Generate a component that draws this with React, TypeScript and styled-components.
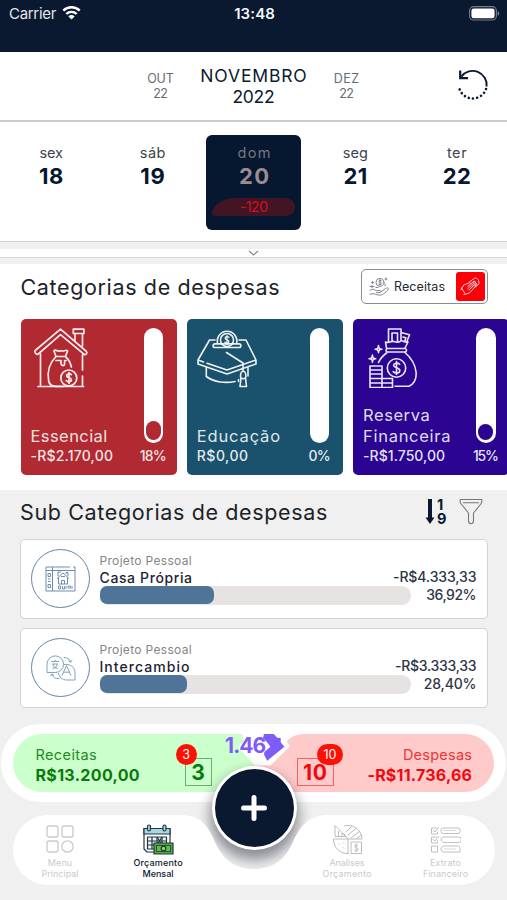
import React from 'react';
import styled, { createGlobalStyle } from 'styled-components';

const navy = '#0a1930';

const GlobalStyle = createGlobalStyle`
  *, *::before, *::after { box-sizing: border-box; }
  body { margin: 0; background: #f0f0f0; overflow: hidden; font-family: Inter, 'Open Sans', sans-serif; }
`;

const Screen = styled.div`
  width: 507px;
  height: 900px;
  overflow: hidden;
  background: #f0f0f0;
  display: flex;
  flex-direction: column;
`;

const Text = styled.span<{ $size: number; $line: number; $weight?: number; $track?: number; $color?: string }>`
  display: block;
  white-space: nowrap;
  font-size: ${p => p.$size}px;
  line-height: ${p => p.$line}px;
  font-weight: ${p => p.$weight ?? 400};
  letter-spacing: ${p => p.$track ?? 0}px;
  margin-right: ${p => -(p.$track ?? 0)}px;
  color: ${p => p.$color ?? navy};
`;

/* ---------- top ---------- */

const StatusBar = styled.header`
  flex: none;
  height: 52px;
  padding: 4px 7px 0 9px;
  background: ${navy};
  display: grid;
  grid-template-columns: 1fr auto 1fr;
  align-items: start;
`;

const Carrier = styled.div`
  display: flex;
  gap: 6px;
  svg { margin-top: 1px; }
`;

const BatterySlot = styled.div`
  display: flex;
  justify-content: flex-end;
  padding-top: 2px;
`;

const MonthBar = styled.section`
  flex: none;
  height: 70px;
  background: #fff;
  border-bottom: 2px solid #cbcbcb;
  display: grid;
  grid-template-columns: 1fr 28px 106px 28px 1fr;
  column-gap: 26px;
  padding: 13px 18px 0;
`;

const Month = styled.div<{ $drop?: number }>`
  display: flex;
  flex-direction: column;
  align-items: center;
  padding-top: ${p => p.$drop ?? 0}px;
`;

const ResetSlot = styled.div`
  display: flex;
  justify-content: flex-end;
  padding-top: 4px;
`;

const DayStrip = styled.section`
  flex: none;
  height: 120px;
  background: #fff;
  border-bottom: 1px solid #d2d2d2;
  display: grid;
  grid-template-columns: repeat(5, 101.4px);
  justify-items: center;
  padding: 12.5px 0 0 0.5px;
`;

const Day = styled.div<{ $active?: boolean }>`
  width: 95px;
  height: 95px;
  border-radius: 6px;
  background: ${p => (p.$active ? '#061730' : 'transparent')};
  display: flex;
  flex-direction: column;
  align-items: center;
  padding-top: 9.5px;
`;

const DayTotal = styled.div`
  width: 83px;
  height: 18px;
  margin-top: 7px;
  border-radius: 24px 10px 10px 4px / 17px 9px 9px 2px;
  background: #421524;
  display: flex;
  justify-content: center;
`;

const Expander = styled.div`
  flex: none;
  height: 22px;
  background: #f0f0f0;
  padding-top: 7px;
`;

const ExpanderTrack = styled.div`
  height: 9px;
  background: #fff;
  border-bottom: 1px solid #d6d6d6;
  display: flex;
  justify-content: center;
  align-items: center;
`;

/* ---------- categories ---------- */

const Categories = styled.section`
  flex: none;
  height: 226px;
  background: #fff;
  padding: 5px 0 0 20.5px;
`;

const CategoriesHead = styled.div`
  display: flex;
  justify-content: space-between;
  padding-right: 19px;
`;

const Toggle = styled.button`
  width: 127px;
  height: 35px;
  border: 1px solid #8d8d8d;
  border-radius: 5px;
  background: #fff;
  padding: 0 2px 0 7px;
  display: flex;
  align-items: center;
  font-family: inherit;
`;

const ToggleLabel = styled(Text)`
  flex: 1;
  text-align: left;
  padding-left: 4px;
`;

const ToggleThumb = styled.span`
  width: 29.5px;
  height: 29.5px;
  border-radius: 3px;
  background: #fb0007;
  display: flex;
  align-items: center;
  justify-content: center;
`;

const Cards = styled.div`
  display: flex;
  gap: 10px;
  padding-top: 14px;
`;

const Card = styled.article<{ $bg: string }>`
  flex: none;
  width: 156.3px;
  height: 156px;
  border-radius: 5px;
  background: ${p => p.$bg};
  padding: 9px 10px 10px;
  display: grid;
  grid-template-columns: 1fr 27px;
`;

const CardMain = styled.div`
  display: flex;
  flex-direction: column;
  justify-content: space-between;
`;

const IconPad = styled.div<{ $x: number }>`
  padding-left: ${p => p.$x}px;
  height: 58px;
`;

const CardSide = styled.div`
  display: flex;
  flex-direction: column;
  align-items: center;
  justify-content: space-between;
`;

const Meter = styled.div`
  width: 19.5px;
  height: 115px;
  border-radius: 10px;
  background: #fff;
  display: flex;
  align-items: flex-end;
  justify-content: center;
  padding-bottom: 3px;
`;

const MeterFill = styled.div<{ $h: number; $color: string }>`
  width: 15px;
  height: ${p => p.$h}px;
  border-radius: 7.5px;
  background: ${p => p.$color};
`;

/* ---------- sub categories ---------- */

const SubCategories = styled.section`
  flex: none;
  height: 234px;
  padding: 7px 19.5px 0 20px;
`;

const SubHead = styled.div`
  display: flex;
  justify-content: space-between;
  height: 42px;
`;

const Tools = styled.div`
  display: flex;
  gap: 12px;
  padding: 1px 5px 0 0;
`;

const SortBox = styled.div`
  display: flex;
  gap: 2px;
`;

const SubRow = styled.article`
  height: 80px;
  margin-bottom: 9px;
  border: 1px solid #d3d3d3;
  border-radius: 5px;
  background: #fff;
  display: grid;
  grid-template-columns: 60px minmax(0, 1fr) auto;
  padding: 9px 10px 0;
`;

const Round = styled.div`
  width: 59px;
  height: 59px;
  border: 1.5px solid #6485a9;
  border-radius: 50%;
  display: flex;
  align-items: center;
  justify-content: center;
`;

const SubBody = styled.div`
  padding: 2.500px 0 0 8.500px;
`;

const Track = styled.div`
  width: 311px;
  height: 19px;
  border-radius: 9px;
  background: #e7e3e2;
`;

const TrackFill = styled.div<{ $w: number }>`
  width: ${p => p.$w}%;
  height: 18px;
  border-radius: 7px;
  background: #507398;
`;

const Amounts = styled.div`
  display: flex;
  flex-direction: column;
  align-items: flex-end;
  padding-top: 18.5px;
`;

/* ---------- footer ---------- */

const Totals = styled.section`
  flex: none;
  height: 78px;
  margin: 0 1px;
  padding: 10px 12px;
  border-radius: 40px;
  background: #fff;
  display: grid;
  grid-template-columns: 1fr 1fr;
  position: relative;
`;

const Income = styled.div`
  background: #cbffcb;
  border-radius: 29px 0 0 29px;
  display: flex;
  justify-content: space-between;
  padding: 11px 42px 0 22.5px;
`;

const Outcome = styled.div`
  background: #ffcaca;
  border-radius: 0 29px 29px 0;
  display: flex;
  justify-content: space-between;
  padding: 11px 22px 0 43px;
`;

const TotalText = styled.div<{ $end?: boolean }>`
  display: flex;
  flex-direction: column;
  align-items: ${p => (p.$end ? 'flex-end' : 'flex-start')};
`;

const CountBox = styled.div<{ $w: number; $color: string }>`
  position: relative;
  width: ${p => p.$w}px;
  height: 28px;
  margin-top: 13px;
  border: 1px solid ${p => p.$color};
  display: flex;
  justify-content: center;
`;

const Badge = styled.span<{ $w: number; $x: number }>`
  position: absolute;
  left: ${p => p.$x}px;
  top: -15px;
  width: ${p => p.$w}px;
  height: 21px;
  border-radius: 11px;
  background: #fd1005;
  display: flex;
  justify-content: center;
`;

const Balance = styled.div`
  position: absolute;
  left: 222.5px;
  top: 8px;
  width: 80px;
  height: 38px;
  svg { position: absolute; inset: 0; }
`;

const BalanceValue = styled.div`
  position: absolute;
  left: 1.5px;
  top: 1px;
`;

const AddButton = styled.button`
  position: absolute;
  left: 210.5px;
  top: 42px;
  width: 85px;
  height: 84px;
  border: 3px solid #fff;
  border-radius: 50%;
  background: ${navy};
  box-shadow: 0 8px 13px 2px rgba(20, 25, 40, 0.46);
  display: flex;
  align-items: center;
  justify-content: center;
  padding: 0;
`;

const NavBar = styled.nav`
  flex: none;
  position: relative;
  width: 482px;
  height: 70px;
  margin: 13px 0 0 13px;
  background: #fff;
  clip-path: path('M35 0 H168 C190 0 196 14 202 27 C210 45 222 54 241 54 C260 54 272 45 280 27 C286 14 294 0 314 0 H447 A35 35 0 0 1 447 70 H35 A35 35 0 0 1 35 0 Z');
  display: grid;
  grid-template-columns: 94px 102px 89px 98px 99px;
`;

const NavItem = styled.div`
  display: flex;
  flex-direction: column;
  align-items: center;
  padding-top: 9px;
`;

const NavIcon = styled.div`
  height: 33px;
`;

/* ---------- icons ---------- */

const Wifi = () => (
  <svg width="19" height="16" viewBox="0 0 19 16" fill="none" stroke="#fff" strokeWidth="2.4">
    <path d="M1.3 5.6a11.8 11.8 0 0 1 16.4 0M4.3 9a7.4 7.4 0 0 1 10.4 0" />
    <path d="M9.5 14.6 6.4 11.4a4.4 4.4 0 0 1 6.2 0Z" fill="#fff" stroke="none" />
  </svg>
);

const Battery = () => (
  <svg width="31" height="15" viewBox="0 0 31 15">
    <rect x=".6" y=".6" width="26.8" height="13.4" rx="4" fill="none" stroke="#747d8c" strokeWidth="1.1" />
    <rect x="2.4" y="2.4" width="23.2" height="9.8" rx="2.3" fill="#fff" />
    <path d="M28.7 5v4.8c2-.7 2-4.1 0-4.8Z" fill="#747d8c" />
  </svg>
);

const Reset = () => (
  <svg width="33" height="33" viewBox="0 0 33 33" fill="none" stroke={navy}>
    <path d="M5.4 7.6A14 14 0 0 1 30.6 17.5" strokeWidth="1.9" />
    <path d="M4.2 1.5v7.6h7.8" strokeWidth="2.2" />
    <path d="M30 20A14 14 0 0 1 2.8 16.5" strokeWidth="2.6" strokeLinecap="round" strokeDasharray=".01 4.25" />
  </svg>
);

const Chevron = () => (
  <svg width="11" height="7" viewBox="0 0 11 7" fill="none" stroke="#888" strokeWidth="1.2">
    <path d="m1 1 4.5 4L10 1" />
  </svg>
);

const HandCoins = () => (
  <svg width="21" height="20" viewBox="0 0 21 20" fill="none" stroke="#747983" strokeWidth=".9" strokeLinecap="round">
    <circle cx="11" cy="5.4" r="4" />
    <path d="M12.5 3.8c-1-1-2.800-.6-2.600.6.2 1.200 2.500.8 2.500 2.100s-1.900 1.500-2.800.6M11 2.600v5.600M3.500 4.500v2M2.500 5.500h2M17 1v2M16 2h2M1 9.500h4M7 10.500h2M3 8.500v2M16 7v2" />
    <path d="M1 13.200c2.500-1.600 4-1.200 6 .4h4c1.500 0 1.400 2 0 2H7.500M12 14.700l5.500-3.600c1.500-.8 2.600.5 1.600 1.600-2.200 2.500-4.600 5.200-7.600 5.400-4 .2-5.400-1.500-7.500-1.400L1 17.200" />
  </svg>
);

const HandMoney = () => (
  <svg width="21" height="21" viewBox="0 0 22 22" fill="none" stroke="#fff" strokeWidth="1" strokeLinejoin="round" strokeLinecap="round" opacity=".85">
    <path d="m9.500 6.500 5-3.700c2-1.500 4-.3 5 2.200s.2 4-1.700 5.200l-2 1.500M12 7.600l3-2.300 2.800 3.400-2.200 1.600" />
    <path d="M1 14.500 4 9.300l6.200-2.200c1.300 0 1.400 1.200.5 1.800L8 10.800M4 19.500l6-1.800 6.600-7.200c.7-1.200-.8-2-1.600-1.100l-3.600 3.400M1.500 12.500 5 18M8 13.500l4.500-4.300c1.100-.8 2 .4 1.300 1.200L9.500 14.700" />
    <circle cx="15" cy="7" r="1.300" />
  </svg>
);

const House = () => (
  <svg width="56" height="60" viewBox="0 0 56 60" fill="none" stroke="#fff" strokeOpacity=".9" strokeWidth="1.7" strokeLinecap="round" strokeLinejoin="round">
    <path d="M2.2 22.5 27.5 1.2 53.5 23.5c1.3 1.3-.8 4-2.6 2.7L27.5 6.7 5.2 26c-1.8 1.4-4.3-2-3-3.5ZM7.5 26v32.3M49.5 27v15M49.5 48v10M5 58.5h45.5M42 12V5.5h7.5V18M40.3 1.2h10.6v4.3H40.3Z" />
    <path d="M23 28.500 21 23c1-2 3-.2 4 0s4-.5 5 0 3-2 4.600-.1l-2.200 5.600ZM23 28.500c-7 7-9 14-7.400 24 .6 4.100 3 5.800 7 5.800h7.600M32.400 28.500c3.400 3 5 6 6 10.500M23 32.500h5v3.200c.4 2.500 3.500 2.500 3.600 0v-3.200h1.500" />
    <circle cx="35.8" cy="50" r="8" />
    <path d="M38.3 46.600c-1.500-1.500-4.800-1-4.600 1.200s4.700 1.500 4.700 4-3.600 2.500-5.100.9M36 44.500v11" />
  </svg>
);

const Cap = () => (
  <svg width="60" height="60" viewBox="0 0 60 60" fill="none" stroke="#fff" strokeOpacity=".92" strokeWidth="1.6" strokeLinecap="round" strokeLinejoin="round">
    <path d="M18 12H12.5L1 32v4l29 10 29-10v-4L49 12h-7M1 32l5.5 2M10 35.2 30 42l29-10M18 19.5h24c2.500 0 2.500-3.600 0-3.600H18c-2.500 0-2.500 3.600 0 3.600ZM20.700 15.800a9.800 9.800 0 1 1 18.800 0M9.300 39.500v9C17 54.500 29 55.300 38 53.500M29.500 24.500 46 35v8M51 38.500V48M43.500 48.500c0-7 5.400-7 5.400 0 0 3-5.400 3-5.400 0ZM44 50l-1 8.500h6.500l-1-8.500M41.500 51.500v2" />
    <circle cx="30" cy="12" r="6.5" />
    <path d="M32 9.300c-1.500-1.300-4-.7-3.800 1 .2 1.800 3.700 1.200 3.700 3.200s-2.800 2-4 .8M30 7.600v8.800" strokeWidth="1.3" />
  </svg>
);

const MoneyBag = () => (
  <svg width="50" height="60" viewBox="0 0 50 60" fill="none" stroke="#fff" strokeOpacity=".9" strokeWidth="1.6" strokeLinecap="round" strokeLinejoin="round">
    <path d="M20.5 13V1H33v12M24 13V5h5.500v8M33 4.500l8.500 2.300-2.700 7M35 9l2.800.8-1 3.500M18.500 20l-1-6c4 1.500 6-1.500 8.500-.5s4 1.500 6.500-.3 3 2 7.500.8L37 20M19.500 20.500h17.500c2 0 2 3.500 0 3.500H19.500c-2 0-2-3.500 0-3.500ZM19 24.500c-4.500 3.500-7 6.500-8.500 10M37 24.500c13 11.500 15 28 4 33.800H27" />
    <circle cx="28.500" cy="40" r="9.200" />
    <path d="M31.700 36.300c-2-2-6.300-1.200-6 1.200.3 2.700 6.100 1.900 6.100 4.900 0 3.100-4.600 3.300-6.600 1.200M28.500 33.500v13M2 38h12v21.500H2ZM2 42h12M2 46h12M2 50.500h22.500v9H2M2 55h22.500M14 50v9.500M10.500 17.500c0 2.800 1 3.700 3.400 3.700-2.400 0-3.400 1-3.400 3.600 0-2.600-1-3.600-3.400-3.600 2.400 0 3.400-.9 3.400-3.700ZM4.400 27c0 2.800 1 3.700 3.400 3.700-2.400 0-3.400 1-3.400 3.600 0-2.600-1-3.600-3.400-3.600 2.400 0 3.400-.9 3.400-3.700Z" />
  </svg>
);

const SortArrow = () => (
  <svg width="10" height="27" viewBox="0 0 10 27" fill={navy}>
    <path d="M3 1h4v18.500h2.500L5 26 .5 19.500H3Z" />
  </svg>
);

const Funnel = () => (
  <svg width="24" height="27" viewBox="0 0 24 27" fill="none" stroke="#777" strokeWidth="1.1" strokeLinejoin="round">
    <path d="M1.200 1.500h21.600c.4 2.300 0 3.300-1 4.500l-7.300 9v7.500c0 1.600-1 3.200-2.500 3.200s-2.500-1.200-2.500-2.700v-8L2.200 6C1.200 4.800.8 3.800 1.200 1.500ZM4 4.700h16" />
  </svg>
);

const HouseScreen = () => (
  <svg width="31" height="26" viewBox="0 0 31 26" fill="none" stroke="#6c8db0" strokeWidth="1">
    <path d="M25 1H1v24h29V1h-2M1 4.500h29M7.500 1v24M3 7.500h2.500v3H3ZM3 13h2.500M3 15.500h2.500M3 18.500h2.500v3H3Z" />
    <path d="M12 12.500 18 7l6 5.500M13.500 11.500v6.500h9v-6.500M13 10V6h3M16.500 18v-3.500h3V18M16 10.500h4M21 8V6.500h2V10" />
    <path d="M13.500 20v3h2v-3ZM17.500 20v3h2v-3M21 20v3M23 20h2.500v2H23ZM27 20v3" strokeWidth=".9" />
  </svg>
);

const Translate = () => (
  <svg width="30" height="26" viewBox="0 0 30 26" fill="none" stroke="#7895b5" strokeWidth=".9">
    <path d="M1 17.500V9A8.300 8.300 0 1 1 9.300 17.500ZM18 9.500c6-.8 11 2.500 11 8V25h-8c-5 0-8-3-8.500-7" />
    <path d="M16 20.500 20.500 10.500 25 20.500M17.500 17.200h6M5 6.500h8M9 5v1.500M6 9h6M7 9c0 3 2 4 4.500 4.500M11 9c0 3-2 4-4.500 4.500M18 2.500c4 0 6 2 6.500 4.500M22.500 5.500l2 2 1.500-2.300M13.500 23.500C9 24 7 22 6 19.500M4.500 21l1.500-2 2 1.500" />
  </svg>
);

const Grid = () => (
  <svg width="28" height="29" viewBox="0 0 28 29" fill="none" stroke="#cacaca" strokeWidth="1.300">
    <rect x="1" y="2" width="11" height="11" rx="2" />
    <rect x="16" y="2" width="11" height="11" rx="2" />
    <rect x="1" y="17" width="11" height="11" rx="2" />
    <circle cx="21.500" cy="22.500" r="5.700" />
  </svg>
);

const Calendar = () => (
  <svg width="32" height="31" viewBox="0 0 32 31" stroke="#243442" strokeWidth="1.200" strokeLinejoin="round">
    <path d="M2 4.500h26v23.500H5l-3-3Z" fill="#fff" />
    <path d="M2 4.500h26V10H2Z" fill="#a8d9e2" />
    <path d="M5.500 13h19v12h-19ZM5.500 17h19M5.500 21h19M10 13v12M15 13v12M20 13v12" fill="#e8f4f6" />
    <path d="m15 13 5 8M20 13l-5 8" fill="none" />
    <rect x="5.500" y="1" width="3" height="6" rx="1.500" fill="#a8d9e2" />
    <rect x="21" y="1" width="3" height="6" rx="1.500" fill="#a8d9e2" />
    <path d="M12 19h19v11H12Z" fill="#4cae3c" />
    <path d="M14.500 21.500h14v6h-14Z" fill="#62bf42" strokeWidth=".8" />
    <circle cx="21.500" cy="24.500" r="2.300" fill="#8edb54" />
  </svg>
);

const Analysis = () => (
  <svg width="31" height="31" viewBox="0 0 31 31" fill="none" stroke="#bcbcbc" strokeWidth="1">
    <path d="M12 2A14 14 0 0 1 30 15H16L11 9M16 15H1.500A14 14 0 0 0 17 29.500M16 15v14M3 12.500V1.500L14 12.500ZM6.500 12V7M10 12V9M14 8l6-6M16 11 24.500 4M19 14l9-7M24.500 14.500 29.500 11" />
    <path d="M19 29.500V18h10.500v11.500Z" />
    <path d="M26 21.500c-1-1-3.500-.8-3.400.8.200 1.800 3.500 1 3.500 3s-2.800 1.800-3.800.6M24.200 19.500v8.500M6.500 19.500l1 1M11 23.500l1 1M11 18.500l1 1" />
  </svg>
);

const Checklist = () => (
  <svg width="31" height="31" viewBox="0 -1.500 31 31" fill="none" stroke="#c0c0c0" strokeWidth="1">
    <path d="M7 2.500H1.500v6h6V6M7 11.500H1.500v6h6V15M1.500 20.500h6v6h-6ZM3 4.500l2 2 4-5M3 13.500l2 2 4-5" />
    <rect x="11" y="2.500" width="19" height="5.500" rx="2" />
    <path d="M13 11.500h15.500a2 2 0 0 1 0 5.500H13L11 15v-2ZM13 20.500h15.500a2 2 0 0 1 1.500 2v4H13l-2-2v-2Z" />
    <path d="M13 5h13M14 23.500h12" strokeWidth=".6" />
  </svg>
);

const BalanceMark = () => (
  <svg width="80" height="38" viewBox="0 0 80 38">
    <path d="M14 15 20 9 18 2 24 0H80V2C72 2 67 5 62.500 9.500L66 14 46.500 33.500H31Z" fill="#fff" />
    <path
      d="M40 2h9.800l3.400 3.700h3.500v4.600l3.700 4.400-17.200 14-3-5.700v-2.700l6.200-5.600-3.300-4.400L39 6Z"
      fill="#7f5cf8"
    />
  </svg>
);

/* ---------- content ---------- */

const days = [
  { name: 'sex', num: '18', nameTrack: -0.2, numTrack: 0.7 },
  { name: 'sáb', num: '19', nameTrack: 0.6, numTrack: 0.7 },
  { name: 'dom', num: '20', nameTrack: 1.4, numTrack: 1.3, total: '-120' },
  { name: 'seg', num: '21', nameTrack: 0.1, numTrack: 0.2 },
  { name: 'ter', num: '22', nameTrack: 0.6, numTrack: 0.5 },
];

const categories = [
  { lines: ['Essencial'], track: 0.42, value: '-R$2.170,00', valueTrack: 0.2, pct: '18%', pctTrack: -0.8, fill: 19, color: '#b12a31', icon: <House />, pad: 2 },
  { lines: ['Educação'], track: 0.85, value: 'R$0,00', valueTrack: 0.5, pct: '0%', pctTrack: -0.8, fill: 0, color: '#1a526d', icon: <Cap />, pad: 0 },
  { lines: ['Reserva', 'Financeira'], track: 0.55, value: '-R$1.750,00', valueTrack: 0.05, pct: '15%', pctTrack: -1.2, fill: 16, color: '#2b0592', icon: <MoneyBag />, pad: 5 },
];

const subs = [
  { name: 'Casa Própria', track: 0.62, value: '-R$4.333,33', valueTrack: -0.12, pct: '36,92%', pctTrack: -0.45, fill: 36.92, icon: <HouseScreen /> },
  { name: 'Intercambio', track: 1.05, value: '-R$3.333,33', valueTrack: -0.3, pct: '28,40%', pctTrack: -0.15, fill: 28.1, icon: <Translate /> },
];

export default function App() {
  return (
    <Screen>
      <GlobalStyle />
      <StatusBar>
        <Carrier>
          <Text $size={15} $line={20} $track={-0.3} $color="#e3e6ea">Carrier</Text>
          <Wifi />
        </Carrier>
        <Text $size={15} $line={20} $weight={600} $track={0.1} $color="#f3f5f7">13:48</Text>
        <BatterySlot><Battery /></BatterySlot>
      </StatusBar>

      <MonthBar>
        <span />
        <Month $drop={6}>
          <Text $size={12.5} $line={15} $track={-0.2} $color="#666b73">OUT</Text>
          <Text $size={12.5} $line={15} $track={-0.6} $color="#666b73">22</Text>
        </Month>
        <Month>
          <Text $size={17.5} $line={21} $track={0.85}>NOVEMBRO</Text>
          <Text $size={17.5} $line={21} $track={-0.3}>2022</Text>
        </Month>
        <Month $drop={6}>
          <Text $size={12.5} $line={15} $track={0.5} $color="#666b73">DEZ</Text>
          <Text $size={12.5} $line={15} $track={-0.6} $color="#666b73">22</Text>
        </Month>
        <ResetSlot><Reset /></ResetSlot>
      </MonthBar>

      <DayStrip>
        {days.map(d => (
          <Day key={d.num} $active={!!d.total}>
            <Text $size={14.5} $line={18} $track={d.nameTrack} $color={d.total ? '#767780' : '#3c434d'}>{d.name}</Text>
            <Text $size={22} $line={29} $weight={700} $track={d.numTrack} $color={d.total ? '#9d8b90' : '#061730'}>{d.num}</Text>
            {d.total && (
              <DayTotal>
                <Text $size={14.5} $line={18} $track={-0.8} $color="#d20f1a">{d.total}</Text>
              </DayTotal>
            )}
          </Day>
        ))}
      </DayStrip>

      <Expander>
        <ExpanderTrack><Chevron /></ExpanderTrack>
      </Expander>

      <Categories>
        <CategoriesHead>
          <Text $size={21.5} $line={36} $track={0.64} $color="#202226">Categorias de despesas</Text>
          <Toggle>
            <HandCoins />
            <ToggleLabel $size={12.5} $line={16} $track={0.1} $color="#26292f">Receitas</ToggleLabel>
            <ToggleThumb><HandMoney /></ToggleThumb>
          </Toggle>
        </CategoriesHead>
        <Cards>
          {categories.map(c => (
            <Card key={c.value} $bg={c.color}>
              <CardMain>
                <IconPad $x={c.pad}>{c.icon}</IconPad>
                <div>
                  {c.lines.map(l => (
                    <Text key={l} $size={16.5} $line={21} $track={l === 'Financeira' ? 0.7 : c.track} $color="rgba(255,255,255,.87)">{l}</Text>
                  ))}
                  <Text $size={14} $line={18} $weight={500} $track={c.valueTrack} $color="rgba(255,255,255,.9)">{c.value}</Text>
                </div>
              </CardMain>
              <CardSide>
                <Meter>{c.fill > 0 && <MeterFill $h={c.fill} $color={c.color} />}</Meter>
                <Text $size={14} $line={18} $weight={500} $track={c.pctTrack} $color="rgba(255,255,255,.9)">{c.pct}</Text>
              </CardSide>
            </Card>
          ))}
        </Cards>
      </Categories>

      <SubCategories>
        <SubHead>
          <Text $size={21.5} $line={31} $track={0.64} $color="#202226">Sub Categorias de despesas</Text>
          <Tools>
            <SortBox>
              <SortArrow />
              <Text $size={14.5} $line={13.5} $weight={700}>1<br />9</Text>
            </SortBox>
            <Funnel />
          </Tools>
        </SubHead>
        {subs.map(s => (
          <SubRow key={s.name}>
            <Round>{s.icon}</Round>
            <SubBody>
              <Text $size={12} $line={17} $track={0.32} $color="#858585">Projeto Pessoal</Text>
              <Text $size={14} $line={17} $weight={500} $track={s.track} $color="#1c2435">{s.name}</Text>
              <Track><TrackFill $w={s.fill} /></Track>
            </SubBody>
            <Amounts>
              <Text $size={14} $line={18} $weight={500} $track={s.valueTrack} $color="#2e3548">{s.value}</Text>
              <Text $size={14} $line={18} $weight={500} $track={s.pctTrack} $color="#2e3548">{s.pct}</Text>
            </Amounts>
          </SubRow>
        ))}
      </SubCategories>

      <Totals>
        <Income>
          <TotalText>
            <Text $size={14.5} $line={19} $track={0.4} $color="#258a25">Receitas</Text>
            <Text $size={16} $line={23} $weight={700} $track={0.33} $color="#087b0b">R$13.200,00</Text>
          </TotalText>
          <CountBox $w={27} $color="#78a878">
            <Text $size={21} $line={27} $weight={700} $color="#087b0b">3</Text>
            <Badge $w={21} $x={-10}><Text $size={12.5} $line={21} $color="#fff">3</Text></Badge>
          </CountBox>
        </Income>
        <Outcome>
          <CountBox $w={37} $color="#f26464">
            <Text $size={21} $line={27} $weight={700} $track={0.8} $color="#f2070d">10</Text>
            <Badge $w={26} $x={19.5}><Text $size={12.5} $line={21} $color="#fff">10</Text></Badge>
          </CountBox>
          <TotalText $end>
            <Text $size={14.5} $line={19} $track={0.25} $color="#ef3434">Despesas</Text>
            <Text $size={16} $line={23} $weight={700} $track={0.22} $color="#f2070d">-R$11.736,66</Text>
          </TotalText>
        </Outcome>
        <Balance>
          <BalanceMark />
          <BalanceValue>
            <Text $size={21} $line={26} $weight={700} $track={-0.9} $color="#7f5cf8">1.46</Text>
          </BalanceValue>
        </Balance>
        <AddButton aria-label="+">
          <svg width="26" height="26" viewBox="0 0 26 26" stroke="#fff" strokeWidth="5" strokeLinecap="round">
            <path d="M13 2.500v21M2.500 13h21" />
          </svg>
        </AddButton>
      </Totals>

      <NavBar>
        <NavItem>
          <NavIcon><Grid /></NavIcon>
          <Text $size={9} $line={11} $track={0.1} $color="#cacaca">Menu</Text>
          <Text $size={9} $line={11} $color="#cacaca">Principal</Text>
        </NavItem>
        <NavItem>
          <NavIcon><Calendar /></NavIcon>
          <Text $size={9} $line={11} $weight={500} $track={0.18}>Orçamento</Text>
          <Text $size={9} $line={11} $weight={500}>Mensal</Text>
        </NavItem>
        <span />
        <NavItem>
          <NavIcon><Analysis /></NavIcon>
          <Text $size={9} $line={11} $track={-0.08} $color="#cacaca">Analises</Text>
          <Text $size={9} $line={11} $track={0.22} $color="#cacaca">Orçamento</Text>
        </NavItem>
        <NavItem>
          <NavIcon><Checklist /></NavIcon>
          <Text $size={9} $line={11} $track={0.15} $color="#cacaca">Extrato</Text>
          <Text $size={9} $line={11} $track={0.08} $color="#cacaca">Financeiro</Text>
        </NavItem>
      </NavBar>
    </Screen>
  );
}
